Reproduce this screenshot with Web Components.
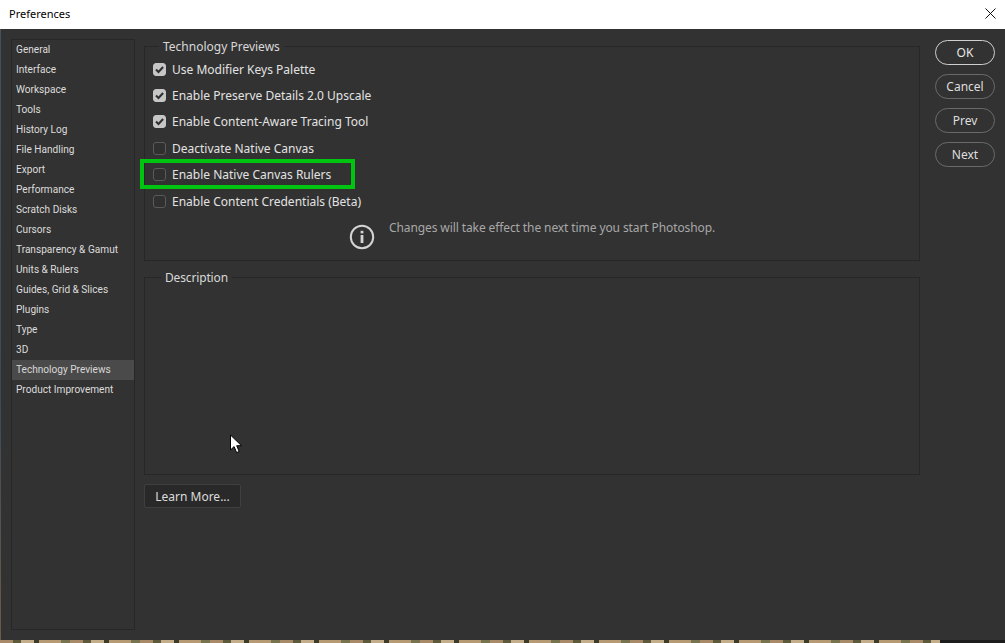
<!DOCTYPE html>
<html>
<head>
<meta charset="utf-8">
<title>Preferences</title>
<style>
html,body{margin:0;padding:0;height:100%;overflow:hidden;background:#1c1c1c;}
body{font-family:"Noto Sans",sans-serif;}
</style>
</head>
<body>
<pref-dialog>
    <pref-sidebar slot="side">
        <pref-item>General</pref-item>
        <pref-item>Interface</pref-item>
        <pref-item>Workspace</pref-item>
        <pref-item>Tools</pref-item>
        <pref-item>History Log</pref-item>
        <pref-item>File Handling</pref-item>
        <pref-item>Export</pref-item>
        <pref-item>Performance</pref-item>
        <pref-item>Scratch Disks</pref-item>
        <pref-item>Cursors</pref-item>
        <pref-item>Transparency &amp; Gamut</pref-item>
        <pref-item>Units &amp; Rulers</pref-item>
        <pref-item>Guides, Grid &amp; Slices</pref-item>
        <pref-item>Plugins</pref-item>
        <pref-item>Type</pref-item>
        <pref-item>3D</pref-item>
        <pref-item selected>Technology Previews</pref-item>
        <pref-item>Product Improvement</pref-item>
    </pref-sidebar>

    <pref-group slot="main" legend="Technology Previews" class="tech">
        <pref-check checked>Use Modifier Keys Palette</pref-check>
        <pref-check checked>Enable Preserve Details 2.0 Upscale</pref-check>
        <pref-check checked>Enable Content-Aware Tracing Tool</pref-check>
        <pref-check>Deactivate Native Canvas</pref-check>
        <pref-check marked>Enable Native Canvas Rulers</pref-check>
        <pref-check>Enable Content Credentials (Beta)</pref-check>
        <pref-notice>Changes will take effect the next time you start Photoshop.</pref-notice>
    </pref-group>
    <pref-group slot="main" legend="Description" class="desc"></pref-group>
    <learn-button slot="main">Learn More...</learn-button>

    <pref-button slot="actions" primary>OK</pref-button>
    <pref-button slot="actions">Cancel</pref-button>
    <pref-button slot="actions">Prev</pref-button>
    <pref-button slot="actions">Next</pref-button>
</pref-dialog>

<script>
class PrefDialog extends HTMLElement{
    constructor(){
        super();
        this.shadowDOM=this.attachShadow({mode:"open"});
        this.shadowDOM.innerHTML=`
        <style>
        :host{display:flex;flex-direction:column;width:1005px;height:643px;position:relative;overflow:hidden;}
        .title{height:29px;flex:none;background:#fff;display:flex;align-items:center;justify-content:space-between;
            padding:0 9px 2px 9px;box-sizing:border-box;color:#000;font:11px "Noto Sans",sans-serif;}
        .title svg{display:block;}
        .body{height:611px;flex:none;background:#323232;display:grid;grid-template-columns:124px 776px 60px;
            column-gap:9px;padding:10px 0 0 11px;box-sizing:border-box;}
        .body>slot[name=side]{display:block;}
        .main{display:flex;flex-direction:column;}
        .actions{display:flex;flex-direction:column;gap:9.2px;margin-left:6px;padding-top:.5px;}
        .strip{height:3px;flex:none;display:flex;}
        .strip i{display:block;}
        .strip .photo{width:940px;background:repeating-linear-gradient(90deg,#a88a68 0 13px,#5d5a3c 13px 21px,#c4ad8b 21px 34px,#3c3a28 34px 39px,#b59a74 39px 61px,#77734f 61px 70px);}
        .strip .rest{flex:1;background:#1c1c1c;}
        .edge{position:absolute;left:0;top:29px;width:1px;height:611px;background:linear-gradient(#46515c,#3b4a5a 60%,#6b5a48);}
        .cursor{position:absolute;left:229px;top:434px;}
        </style>
        <div class="title">
            <span>Preferences</span>
            <svg width="11" height="11" viewBox="0 0 11 11"><path d="M.5.5l10 10M10.5.5l-10 10" stroke="#111" stroke-width="1" fill="none"/></svg>
        </div>
        <div class="body">
            <slot name="side"></slot>
            <div class="main"><slot name="main"></slot></div>
            <div class="actions"><slot name="actions"></slot></div>
        </div>
        <div class="strip"><i class="photo"></i><i class="rest"></i></div>
        <div class="edge"></div>
        <svg class="cursor" width="13" height="20" viewBox="0 0 13 20"><path d="M1.5 1v15l3.6-3.4 2.5 6 2.6-1.1-2.5-5.8h4.8z" fill="#fff" stroke="#000" stroke-width="1"/></svg>
        `;
    }
}

class PrefSidebar extends HTMLElement{
    constructor(){
        super();
        this.shadowDOM=this.attachShadow({mode:"open"});
        this.shadowDOM.innerHTML=`
        <style>
        :host{display:block;width:124px;height:591px;box-sizing:border-box;border:1px solid #272727;}
        .list{display:flex;flex-direction:column;}
        </style>
        <div class="list"><slot></slot></div>
        `;
    }
}

class PrefItem extends HTMLElement{
    constructor(){
        super();
        this.shadowDOM=this.attachShadow({mode:"open"});
        this.shadowDOM.innerHTML=`
        <style>
        :host{display:block;height:20px;padding-left:4px;color:#dcdcdc;
            font:10.1px/20px Roboto,sans-serif;white-space:nowrap;}
        :host([selected]){background:#4a4a4a;color:#d6d6d6;}
        </style>
        <slot></slot>
        `;
    }
}

class PrefGroup extends HTMLElement{
    constructor(){
        super();
        this.shadowDOM=this.attachShadow({mode:"open"});
    }
    connectedCallback(){
        this.render();
    }
    render(){
        let isTech=this.classList.contains("tech");
        this.shadowDOM.innerHTML=`
        <style>
        :host{display:block;flex:none;box-sizing:border-box;}
        :host(.tech){height:222px;}
        :host(.desc){height:205px;margin-top:9px;}
        fieldset{margin:0;height:100%;box-sizing:border-box;border:1px solid #272727;padding:0;min-width:0;}
        legend{margin-left:${isTech?14:16}px;padding:0 4px;color:#d8d8d8;font:12px/14px "Noto Sans",sans-serif;
            letter-spacing:${isTech?0:-.15}px;}
        legend span{display:block;transform:translateY(1px);}
        .in{display:flex;flex-direction:column;padding:3px 0 0 8px;}
        </style>
        <fieldset>
            <legend><span>${this.getAttribute("legend")}</span></legend>
            <div class="in"><slot></slot></div>
        </fieldset>
        `;
    }
}

class PrefCheck extends HTMLElement{
    constructor(){
        super();
        this.shadowDOM=this.attachShadow({mode:"open"});
    }
    connectedCallback(){
        let tick=this.hasAttribute("checked")?`<svg width="13" height="13" viewBox="0 0 13 13"><path d="M3 6.5l2.5 2.5 4.6-5" fill="none" stroke="#2e2e2e" stroke-width="2"/></svg>`:"";
        this.shadowDOM.innerHTML=`
        <style>
        :host{display:flex;align-items:center;gap:6px;height:26.4px;position:relative;color:#e2e2e2;
            font:12px "Noto Sans",sans-serif;white-space:nowrap;}
        .box{width:13px;height:13px;box-sizing:border-box;flex:none;border-radius:3px;display:flex;
            border:1px solid #5a5a5a;background:#303030;}
        :host([checked]) .box{background:#c6c6c6;border-color:#c6c6c6;}
        .box svg{margin:-1px;flex:none;}
        .mark{position:absolute;left:-13px;top:-3px;width:215px;height:30px;box-sizing:border-box;border:4px solid #00c510;}
        </style>
        <span class="box">${tick}</span><span class="txt"><slot></slot></span>
        ${this.hasAttribute("marked")?'<span class="mark"></span>':''}
        `;
    }
}

class PrefNotice extends HTMLElement{
    constructor(){
        super();
        this.shadowDOM=this.attachShadow({mode:"open"});
        this.shadowDOM.innerHTML=`
        <style>
        :host{display:flex;align-items:flex-start;gap:14px;margin:8px 0 0 196px;color:#a8a8a8;
            font:12px/16px "Noto Sans",sans-serif;white-space:nowrap;letter-spacing:-.1px;}
        svg{flex:none;display:block;margin-top:1.5px;}
        span{margin-top:-2px;}
        </style>
        <svg width="26" height="26" viewBox="0 0 26 26">
            <circle cx="13" cy="13" r="11.2" fill="none" stroke="#d4d4d4" stroke-width="2"/>
            <rect x="11.6" y="11" width="2.8" height="8" fill="#d4d4d4"/>
            <rect x="11.6" y="6.8" width="2.8" height="2.6" fill="#d4d4d4"/>
        </svg>
        <span><slot></slot></span>
        `;
    }
}

class PrefButton extends HTMLElement{
    constructor(){
        super();
        this.shadowDOM=this.attachShadow({mode:"open"});
        this.shadowDOM.innerHTML=`
        <style>
        :host{display:flex;align-items:center;justify-content:center;width:60px;height:25px;box-sizing:border-box;
            border:1px solid #6a6a6a;border-radius:12.5px;color:#dedede;font:12px "Noto Sans",sans-serif;}
        :host([primary]){border:1.5px solid #cfcfcf;color:#e6e6e6;}
        </style>
        <slot></slot>
        `;
    }
}

class LearnButton extends HTMLElement{
    constructor(){
        super();
        this.shadowDOM=this.attachShadow({mode:"open"});
        this.shadowDOM.innerHTML=`
        <style>
        :host{display:flex;align-items:center;justify-content:center;flex:none;width:97px;height:24px;margin-top:9px;box-sizing:border-box;
            background:#292929;border:1px solid #3f3f3f;border-radius:2px;color:#dcdcdc;font:12px "Noto Sans",sans-serif;}
        </style>
        <slot></slot>
        `;
    }
}

customElements.define("pref-dialog",PrefDialog);
customElements.define("pref-sidebar",PrefSidebar);
customElements.define("pref-item",PrefItem);
customElements.define("pref-group",PrefGroup);
customElements.define("pref-check",PrefCheck);
customElements.define("pref-notice",PrefNotice);
customElements.define("pref-button",PrefButton);
customElements.define("learn-button",LearnButton);
</script>
</body>
</html>
